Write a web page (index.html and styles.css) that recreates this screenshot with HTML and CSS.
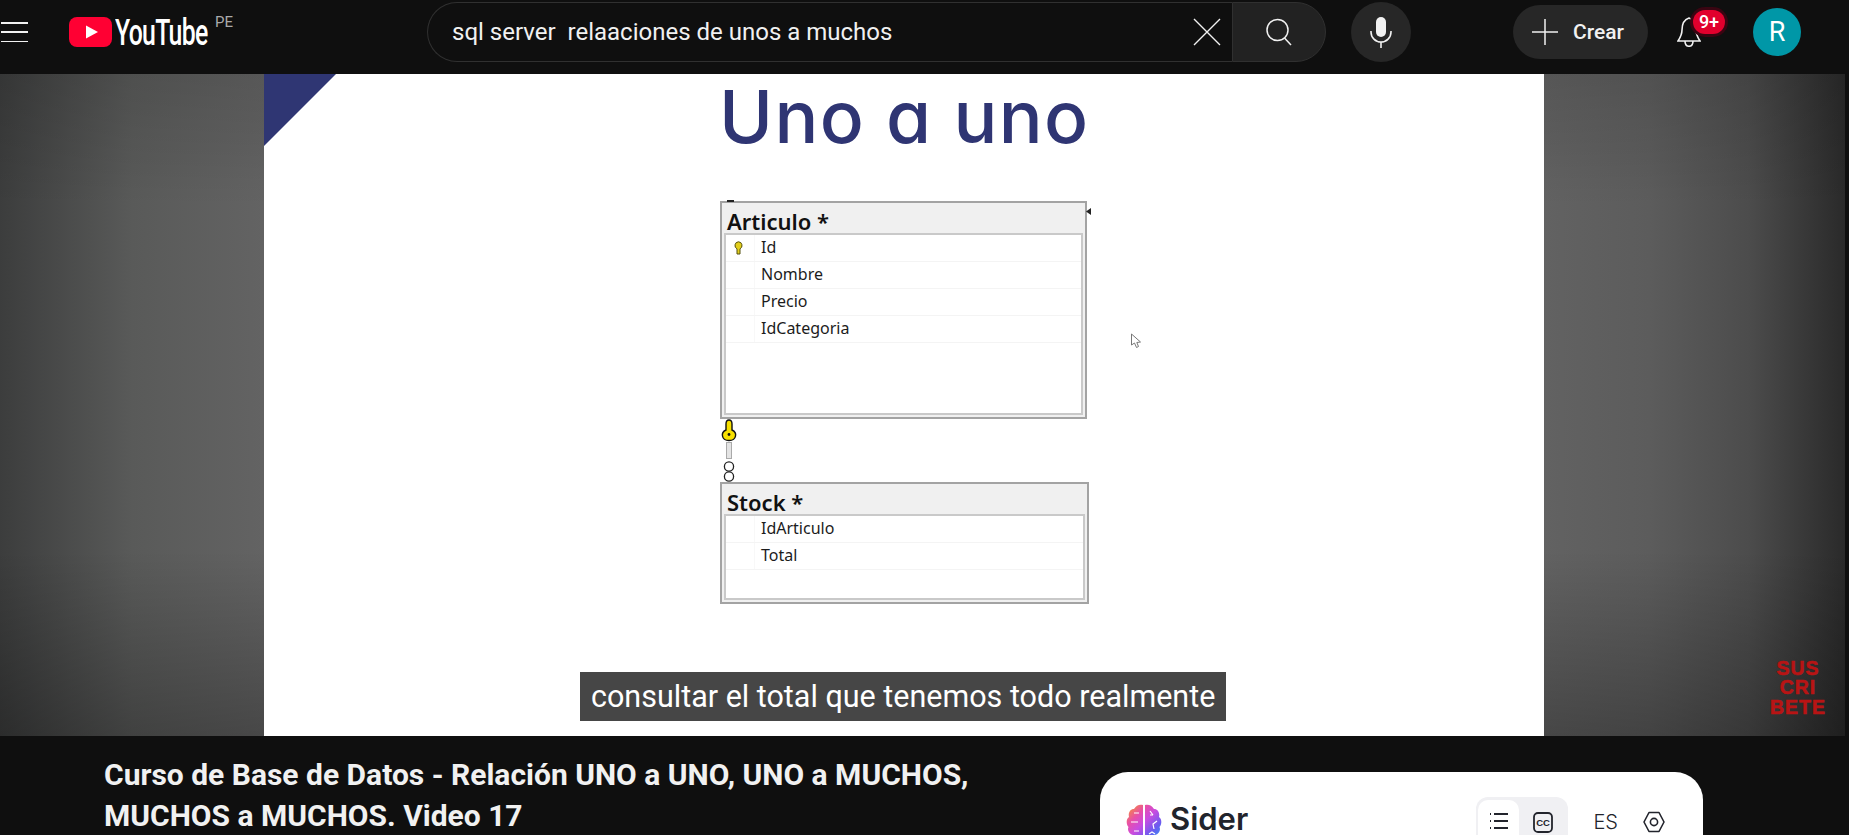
FILE: index.html
```html
<!DOCTYPE html>
<html lang="es">
<head>
  <meta charset="UTF-8">
  <title>Curso de Base de Datos - YouTube</title>
  <meta name="viewport" content="width=device-width, initial-scale=1.0">
  <link rel="stylesheet" href="styles.css">
</head>
<body>
  <header class="topbar">
    <button class="menu-btn" aria-label="Menu">
      <span></span><span></span><span></span>
    </button>
    <a class="logo">
      <svg class="logo-icon" viewBox="0 0 43 30" width="43" height="30">
        <rect width="43" height="30" rx="8" fill="#ff0033"/>
        <path d="M17 8.5 L29 15 L17 21.5 Z" fill="#fff"/>
      </svg>
      <span class="logo-text">YouTube</span>
      <span class="logo-country">PE</span>
    </a>
    <div class="search">
      <div class="search-box">
        <span class="search-text">sql server  relaaciones de unos a muchos</span>
        <svg class="search-clear" viewBox="0 0 28 28" width="28" height="28">
          <path d="M1 1 L27 27 M27 1 L1 27" stroke="#f1f1f1" stroke-width="1.4" fill="none"/>
        </svg>
      </div>
      <div class="search-btn">
        <svg viewBox="0 0 28 28" width="28" height="28">
          <circle cx="12.5" cy="12" r="10.5" stroke="#f1f1f1" stroke-width="1.5" fill="none"/>
          <path d="M19.5 20 L26 27" stroke="#f1f1f1" stroke-width="1.5" fill="none"/>
        </svg>
      </div>
    </div>
    <div class="mic-btn">
      <svg viewBox="0 0 22 32" width="22" height="32">
        <rect x="6" y="1" width="10" height="20" rx="5" fill="#f1f1f1"/>
        <path d="M1 15 V16 A10 10 0 0 0 21 16 V15 M11 26 V32" stroke="#f1f1f1" stroke-width="1.6" fill="none"/>
      </svg>
    </div>
    <div class="create-btn">
      <svg viewBox="0 0 26 26" width="26" height="26">
        <path d="M13 0 V26 M0 13 H26" stroke="#f1f1f1" stroke-width="1.5" fill="none"/>
      </svg>
      <span>Crear</span>
    </div>
    <div class="bell">
      <svg viewBox="0 0 24 30" width="24" height="30">
        <path d="M12 1 C6 3 5 8 5 13 C5 18 3 21 1 24 H23 C21 21 19 18 19 13 C19 8 18 3 12 1 Z M8 24 C8 31 16 31 16 24" stroke="#f1f1f1" stroke-width="1.6" fill="none"/>
      </svg>
      <span class="bell-badge">9+</span>
    </div>
    <div class="avatar">R</div>
  </header>

  <section class="stage">
    <div class="side side-left"></div>
    <div class="slide">
      <h1 class="slide-title">Uno a uno</h1>
      <div class="diagram">
        <div class="table table-articulo">
          <div class="table-name">Articulo *</div>
          <div class="table-body">
            <div class="row">
              <span class="row-handle">
                <svg viewBox="0 0 9 14" width="9" height="14">
                  <path d="M4.5 .8 A3.7 3.7 0 0 1 6 7.8 V13 H3 V7.8 A3.7 3.7 0 0 1 4.5 .8 Z" fill="#e3cf1d" stroke="#55500f" stroke-width="1"/>
                </svg>
              </span>
              <span>Id</span>
            </div>
            <div class="row"><span class="row-handle"></span><span>Nombre</span></div>
            <div class="row"><span class="row-handle"></span><span>Precio</span></div>
            <div class="row"><span class="row-handle"></span><span>IdCategoria</span></div>
          </div>
        </div>
        <svg class="relation" viewBox="0 0 20 63" width="20" height="63">
          <path d="M9 1 C11.5 1 12 3 12 5 V11 C15 12.5 16 15 15.5 17 C15 20 12 21.5 9 21.5 C6 21.5 3 20 2.5 17 C2 15 3 12.5 6 11 V5 C6 3 6.5 1 9 1 Z" fill="#f7e000" stroke="#111" stroke-width="1.4"/>
          <circle cx="9" cy="15.5" r="1.4" fill="#111"/>
          <rect x="6.5" y="23.5" width="5" height="16" fill="#e4e4e4" stroke="#aaa" stroke-width="1"/>
          <circle cx="9" cy="47.5" r="4.6" fill="#fff" stroke="#222" stroke-width="1.3"/>
          <circle cx="9" cy="57.5" r="4.6" fill="#fff" stroke="#222" stroke-width="1.3"/>
        </svg>
        <div class="table table-stock">
          <div class="table-name">Stock *</div>
          <div class="table-body">
            <div class="row"><span class="row-handle"></span><span>IdArticulo</span></div>
            <div class="row"><span class="row-handle"></span><span>Total</span></div>
          </div>
        </div>
      </div>
      <svg class="cursor" viewBox="0 0 12 16" width="12" height="16">
        <path d="M1.5 1 V12 L4.5 10 L6.5 14.5 L8.5 13.5 L6.8 9.5 L10.5 9 Z" fill="#fff" stroke="#777" stroke-width="1"/>
      </svg>
    </div>
    <div class="side side-right">
      <div class="subscribe">SUS<br>CRI<br>BETE</div>
    </div>
    <div class="caption">consultar el total que tenemos todo realmente</div>
  </section>

  <section class="below">
    <h2 class="video-title">Curso de Base de Datos - Relación UNO a UNO, UNO a MUCHOS, MUCHOS a MUCHOS. Video 17</h2>
    <aside class="sider-card">
      <div class="sider-brand">
        <svg viewBox="0 0 36 36" width="36" height="36">
          <defs>
            <linearGradient id="brain" x1="0" y1="0" x2="1" y2="1">
              <stop offset="0" stop-color="#f9a01b"/>
              <stop offset=".3" stop-color="#e84fa8"/>
              <stop offset=".5" stop-color="#c94ce0"/>
              <stop offset=".75" stop-color="#6a5cf0"/>
              <stop offset="1" stop-color="#2a9df4"/>
            </linearGradient>
          </defs>
          <path d="M17 1 V35 C13 37 8 35 7 31 C3 30 1 26 2.5 23 C0 20 0 15 3 13 C2 9 4 5 8 5 C10 1 14 0 17 1 Z M19 1 C22 0 26 1 28 5 C32 5 34 9 33 13 C36 15 36 20 33.5 23 C35 26 33 30 29 31 C28 35 23 37 19 35 Z" fill="url(#brain)"/>
          <path d="M5 18 H12 M8 9 H13 M8 27 H13 M24 7 L27 11 M24 11 L27 11 M31 17 L27 20 L28 25 M23 30 L26 28 L29 30" stroke="#fff" stroke-width="1.2" fill="none"/>
        </svg>
        <span>Sider</span>
      </div>
      <div class="sider-tools">
        <div class="sider-tabs">
          <span class="sider-tab sider-tab-active">
            <svg viewBox="0 0 20 18" width="20" height="18">
              <path d="M5 2 H19 M5 9 H19 M5 16 H19" stroke="#22242c" stroke-width="1.8" fill="none"/>
              <path d="M1 2 H2 M1 9 H2 M1 16 H2" stroke="#22242c" stroke-width="1.8" fill="none"/>
            </svg>
          </span>
          <span class="sider-tab">
            <svg viewBox="0 0 20 21" width="20" height="21">
              <rect x="1" y="1" width="18" height="19" rx="4" stroke="#22242c" stroke-width="1.8" fill="none"/>
              <text class="cc-text" x="10" y="13.8" text-anchor="middle">CC</text>
            </svg>
          </span>
        </div>
        <span class="sider-lang">ES</span>
        <svg class="sider-gear" viewBox="0 0 22 22" width="22" height="22">
          <path d="M6 1.5 H16 L21 11 L16 20.5 H6 L1 11 Z" stroke="#22242c" stroke-width="1.6" fill="none" stroke-linejoin="round"/>
          <circle cx="11" cy="11" r="3.6" stroke="#22242c" stroke-width="1.6" fill="none"/>
        </svg>
      </div>
    </aside>
  </section>
</body>
</html>
```

FILE: styles.css
```css
html, body { height:100%; overflow:hidden; }
body { margin:0; background:#0f0f0f; color:#f1f1f1; font-family:Roboto,"Liberation Sans",sans-serif; }

/* top bar */
.topbar { height:74px; box-sizing:border-box; padding-bottom:10px; display:flex; align-items:center; }
.menu-btn {
  width:27px; height:20px; margin-left:1px; padding:0; border:none; background:none;
  display:flex; flex-direction:column; justify-content:space-between;
}
.menu-btn span { display:block; height:1.5px; background:#f1f1f1; }
.logo { display:flex; width:163px; height:44px; margin-left:41px; align-items:center; position:relative; flex:none; }
.logo-icon { display:block; flex:none; }
.logo-text {
  display:block; width:93px; margin-left:3px; font-size:37px; font-weight:500; letter-spacing:-1px; color:#fff;
  transform:scaleX(.67); transform-origin:left center; white-space:nowrap;
}
.logo-country { position:absolute; left:146px; top:3px; font-size:15px; color:#aaa; }
.search { display:flex; width:899px; height:60px; margin-left:195px; flex:none; }
.search-box {
  flex:1; display:flex; align-items:center; justify-content:space-between; box-sizing:border-box;
  padding:0 11px 0 24px; border:1px solid #303030; border-right:none; border-radius:30px 0 0 30px;
}
.search-text { font-size:24px; white-space:pre; color:#f1f1f1; }
.search-clear { display:block; }
.search-btn {
  width:94px; background:#222; border:1px solid #303030; border-radius:0 30px 30px 0; box-sizing:border-box;
  display:flex; align-items:center; justify-content:center;
}
.mic-btn {
  width:60px; height:60px; margin-left:25px; border-radius:50%; background:#272727;
  display:flex; align-items:center; justify-content:center;
}
.create-btn {
  width:135px; height:54px; margin-left:102px; box-sizing:border-box; padding-left:19px; border-radius:27px;
  background:#272727; display:flex; align-items:center; gap:15px; font-size:21px; font-weight:500;
}
.bell { width:24px; height:30px; margin-left:29px; position:relative; }
.bell svg { display:block; }
.bell-badge {
  position:absolute; left:16px; top:-7px; width:32px; height:24px; border-radius:12px; background:#e1002d;
  box-shadow:0 0 0 3px #3a0512; color:#fff; font-size:18px; font-weight:500; line-height:24px; text-align:center;
}
.avatar {
  width:48px; height:48px; margin-left:52px; border-radius:50%; background:#0097a7; color:#fff;
  font-size:27px; line-height:48px; text-align:center;
}

/* video */
.stage { display:flex; height:662px; width:1845px; position:relative; }
.side-left {
  width:264px; flex:none;
  background:linear-gradient(to bottom, rgba(0,0,0,.12), rgba(0,0,0,0) 20%, rgba(0,0,0,0) 72%, rgba(0,0,0,.28)),
    linear-gradient(to right, #3c3d3d, #595a59 50%, #636363);
}
.side-right {
  flex:1; display:flex; justify-content:flex-end; align-items:flex-end;
  background:linear-gradient(to bottom, rgba(0,0,0,.12), rgba(0,0,0,0) 20%, rgba(0,0,0,0) 72%, rgba(0,0,0,.28)),
    linear-gradient(to right, #626262, #5c5c5c 35%, #4c4c4c 68%, #2a2a2a);
}
.subscribe {
  margin:0 19px 19px 0; color:#b81414; font:700 19.5px/19.5px "Liberation Sans",Arial,sans-serif;
  letter-spacing:1px; text-align:center; -webkit-text-stroke:.6px #b81414;
}
.slide { width:1280px; flex:none; background:#fff; position:relative; box-sizing:border-box; padding-left:456px; }
.slide::before {
  content:""; position:absolute; left:0; top:0; width:72px; height:72px;
  background:#2f3673; clip-path:polygon(0 0, 100% 0, 0 100%);
}
.slide-title {
  margin:0; width:369px; height:90px; color:#2f3573; font:500 73px/85px Inter,"Open Sans",sans-serif;
  font-feature-settings:"cv11"; letter-spacing:1.4px; text-indent:-1px; white-space:nowrap;
}
.diagram { margin-top:37px; width:369px; font-family:"Noto Sans","Open Sans",sans-serif; color:#1c1c1c; }
.table {
  box-sizing:border-box; border:2px solid #a3a3a3; background:#f0f0f0; display:flex; flex-direction:column;
  position:relative;
}
.table-articulo { width:367px; height:218px; }
.table-articulo::before { content:""; position:absolute; left:5px; top:-3px; width:7px; height:2px; background:#222; }
.table-articulo::after {
  content:""; position:absolute; right:-6px; top:5px; width:5px; height:7px;
  background:#222; clip-path:polygon(100% 0, 100% 100%, 0 50%);
}
.table-stock { width:369px; height:122px; }
.table-name { height:30px; flex:none; box-sizing:border-box; padding-left:5px; font-size:22px; font-weight:600; line-height:36px; color:#111; }
.table-body { flex:1; margin:0 2px 2px 2px; background:#fff; border:2px solid #c9c9c9; }
.row { height:27px; box-sizing:border-box; border-bottom:1px solid #f4f4f4; display:flex; font-size:16px; line-height:25px; }
.row-handle { width:28px; margin-right:6px; flex:none; border-right:1px solid #f8f8f8; display:flex; align-items:center; justify-content:center; }
.row-handle svg { display:block; margin-left:-4px; }
.relation { display:block; }
.cursor { position:absolute; left:866px; top:259px; }

/* subtitle over the video */
.caption {
  position:absolute; left:580px; bottom:15px; height:49px; padding:0 11px; background:rgba(8,8,8,.75);
  color:#fff; font-size:30.5px; line-height:49px; white-space:nowrap;
}

/* under the video */
.below { display:flex; align-items:flex-start; height:99px; overflow:hidden; }
.video-title {
  width:892px; margin:18px 0 0 104px; font-size:30px; font-weight:700; line-height:41px; color:#f1f1f1; flex:none;
}
.sider-card {
  width:603px; height:63px; margin:36px 0 0 104px; flex:none; box-sizing:border-box; padding:25px 38px 0 26px;
  background:#fff; border-radius:28px 28px 0 0; color:#22242c; display:flex; justify-content:space-between; align-items:flex-start;
  overflow:hidden;
}
.sider-brand { display:flex; align-items:flex-start; gap:8px; margin-top:7px; font:600 31px/30px Inter,sans-serif; }
.sider-brand svg { display:block; flex:none; }
.sider-tools { display:flex; align-items:flex-start; }
.sider-tabs { display:flex; width:92px; height:50px; box-sizing:border-box; padding:3px 2px 0; border-radius:12px; background:#f0f0f3; }
.sider-tab { width:41px; height:47px; padding-top:12px; box-sizing:border-box; display:flex; justify-content:center; border-radius:10px 10px 0 0; }
.sider-tab + .sider-tab { width:49px; }
.sider-tab-active { background:#fff; }
.cc-text { font:700 9.5px "Liberation Sans",sans-serif; fill:#22242c; }
.sider-lang { margin:13px 0 0 25px; font:300 20px/24px Inter,sans-serif; }
.sider-gear { margin:14px 0 0 25px; display:block; }
```
